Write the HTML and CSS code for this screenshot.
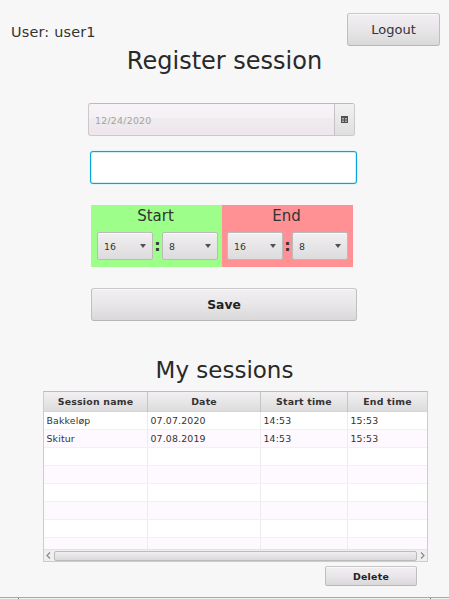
FILE: index.html
```html
<!DOCTYPE html>
<html lang="en">
<head>
<meta charset="utf-8">
<title>Register session</title>
<link rel="stylesheet" href="styles.css">
</head>
<body>
<main class="app">
  <header class="topbar">
    <span class="user">User: user1</span>
    <button class="btn logout">Logout</button>
  </header>
  <h1 class="title">Register session</h1>
  <div class="datepicker">
    <span class="date">12/24/2020</span>
    <span class="calendar">
      <svg width="7" height="7" viewBox="0 0 7 7"><rect width="7" height="7" fill="#505050"/><path d="M1 2h2v1.500H1zM4 2h2v1.500H4zM1 4.500h2V6H1zM4 4.500h2V6H4z" fill="#aaa"/></svg>
    </span>
  </div>
  <input class="name" type="text" aria-label="Session name">
  <section class="times">
    <div class="time start">
      <h2>Start</h2>
      <div class="pickers">
        <span class="combo">16<i></i></span><b>:</b><span class="combo">8<i></i></span>
      </div>
    </div>
    <div class="time end">
      <h2>End</h2>
      <div class="pickers">
        <span class="combo">16<i></i></span><b>:</b><span class="combo">8<i></i></span>
      </div>
    </div>
  </section>
  <button class="btn save">Save</button>
  <h1 class="title sessions-title">My sessions</h1>
  <section class="table">
    <div class="row head"><span>Session name</span><span>Date</span><span>Start time</span><span>End time</span></div>
    <div class="rows">
      <div class="row"><span>Bakkeløp</span><span>07.07.2020</span><span>14:53</span><span>15:53</span></div>
      <div class="row"><span>Skitur</span><span>07.08.2019</span><span>14:53</span><span>15:53</span></div>
      <div class="row"><span></span><span></span><span></span><span></span></div>
      <div class="row"><span></span><span></span><span></span><span></span></div>
      <div class="row"><span></span><span></span><span></span><span></span></div>
      <div class="row"><span></span><span></span><span></span><span></span></div>
      <div class="row"><span></span><span></span><span></span><span></span></div>
      <div class="row"><span></span><span></span><span></span><span></span></div>
    </div>
    <div class="scrollbar">
      <svg width="10" height="11" viewBox="0 0 10 11"><path d="M6 2.500 3 5.500 6 8.500" fill="none" stroke="#8a8a8a" stroke-width="1.200"/></svg>
      <span class="thumb"></span>
      <svg width="10" height="11" viewBox="0 0 10 11"><path d="M4 2.500l3 3-3 3" fill="none" stroke="#8a8a8a" stroke-width="1.200"/></svg>
    </div>
  </section>
  <button class="btn delete">Delete</button>
  <footer class="edge"><span></span><span></span></footer>
</main>
</body>
</html>
```
FILE: styles.css
```css
* { box-sizing: border-box; }
body { margin: 0; background: #f7f7f7; font-family: "DejaVu Sans", sans-serif; color: #333; }
.app { width: 449px; height: 599px; display: flex; flex-direction: column; overflow: hidden; }
.topbar { height: 46px; flex: none; display: flex; justify-content: space-between; padding: 13px 9px 0 11px; }
.user { font-size: 14.4px; letter-spacing: 0.2px; line-height: 18px; margin-top: 10px; }
.btn { display: block; flex: none; padding: 0; font-family: inherit; color: #333; border: 1px solid #c0bfc0; border-top-color: #c8c7c8; border-bottom-color: #b8b7b8; border-radius: 3px; background: linear-gradient(#f1eff1, #e8e6e8 50%, #dad9da); box-shadow: inset 0 1px #faf9fa; }
.logout { width: 93px; height: 33px; font-size: 13px; }
h1, h2 { margin: 0; font-weight: 400; }
.title { flex: none; height: 30px; line-height: 30px; font-size: 24px; text-align: center; color: #292929; }
.datepicker { flex: none; display: flex; width: 267px; height: 33px; margin: 27px 0 0 88px; border: 1px solid #cbc9cb; border-top-color: #bcbbbc; border-radius: 3px; background: linear-gradient(#f7f3f6 0, #f5f0f4 45%, #eeecee 46%, #eee8ed 85%); overflow: hidden; }
.date { flex: 1; padding-left: 6px; font-size: 9.4px; letter-spacing: 0.25px; line-height: 33px; color: #a5a2a4; }
.calendar { width: 20px; border-left: 1px solid #c4c2c4; display: flex; align-items: center; justify-content: center; background: linear-gradient(#f2f1f2, #e0dfe0); }
.name { flex: none; width: 267px; height: 33px; margin: 15px 0 0 90px; border: 1px solid #08a6d8; border-radius: 3px; background: #fff; outline: none; box-shadow: inset 0 0 0 1px #cdf0fb, 0 0 1px #59c9ea; }
.times { flex: none; display: flex; width: 262px; height: 62px; margin: 21px 0 0 91px; }
.time { width: 131px; padding-top: 1px; }
.start { background: #9dff89; }
.end { background: #ff9195; }
.time h2 { height: 20px; line-height: 20px; font-size: 15px; text-align: center; padding-right: 2px; }
.pickers { display: flex; margin: 6px 0 0 6px; }
.end .pickers { margin-left: 5px; }
.pickers b { width: 9px; height: 28px; line-height: 27px; font-size: 16px; display: flex; justify-content: center; }
.combo { width: 56px; height: 28px; padding: 0 6px; display: flex; align-items: center; justify-content: space-between; font-size: 9.4px; border: 1px solid #bbb; border-radius: 2px; background: linear-gradient(#f1eff1, #dddcdd); box-shadow: inset 0 1px #faf9fa; }
.combo i { border: 3.5px solid transparent; border-top: 4px solid #505050; border-bottom: 0; }
.save { width: 266px; height: 33px; margin: 21px 0 0 91px; font-size: 12.3px; font-weight: 700; color: #222; }
.sessions-title { margin-top: 34px; font-size: 23px; }
.table { flex: none; width: 385px; height: 171px; margin: 6px 0 0 43px; border: 1px solid #ccc; border-top-color: #bdbcbd; display: flex; flex-direction: column; background: #fff; }
.row { flex: none; display: grid; grid-template-columns: 104px 113px 87px 79px; height: 18px; line-height: 17px; font-size: 9.4px; letter-spacing: 0.15px; border-bottom: 1px solid #f2f0f2; }
.row:nth-child(even) { background: #fdf9fe; }
.row span { padding-left: 3px; border-right: 1px solid #ececec; }
.row span:last-child { border-right: 0; }
.row.head { height: 20px; line-height: 20px; font-size: 9.4px; letter-spacing: 0.2px; font-weight: 700; text-align: center; border-bottom-color: #d5d4d5; background: linear-gradient(#f2f0f2, #dddcdd); }
.rows .row span { text-indent: -0.5px; }
.head span { padding: 0; border-color: #c5c4c5; }
.rows { flex: 1; min-height: 0; overflow: hidden; }
.scrollbar { flex: none; display: flex; align-items: center; height: 12px; border-top: 1px solid #e4e2e4; background: #f0eff0; }
.thumb { flex: 1; height: 10px; border: 1px solid #bbb; border-radius: 2px; background: linear-gradient(#f0eef0, #dbdadb); }
.delete { width: 92px; height: 20px; margin: 4px 0 0 325px; font-size: 9.4px; letter-spacing: 0.25px; font-weight: 700; color: #222; border-radius: 2px; }
.edge { flex: none; display: flex; justify-content: space-between; margin-top: 11px; height: 3px; padding: 0 18px; border-top: 1px solid #a8a8a8; background: #eff3f4; }
.edge span { width: 1px; background: #777; }
```
